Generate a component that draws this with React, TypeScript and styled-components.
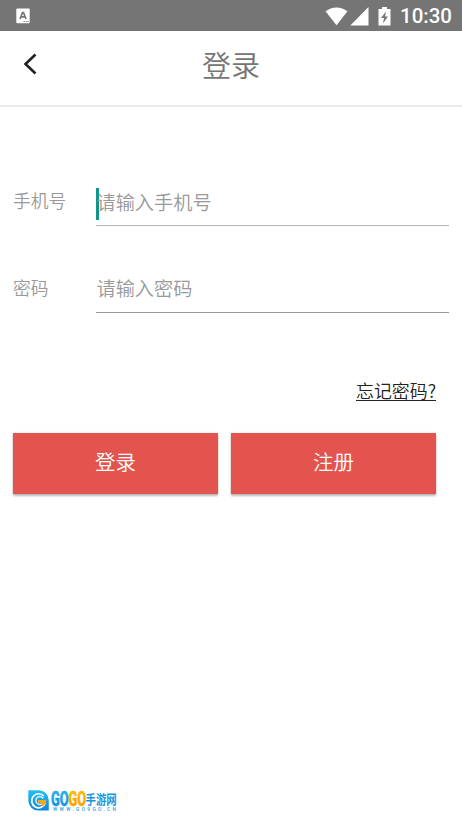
import React from "react";
import styled, { createGlobalStyle } from "styled-components";

const GlobalStyle = createGlobalStyle`
  * { box-sizing: border-box; }
  html, body { margin: 0; padding: 0; background: #fff; overflow: hidden; }
  body { font-family: "Noto Sans CJK SC", "Noto Sans", sans-serif; font-weight: 300; }
`;

const Screen = styled.div`
  width: 100%;
  height: 821px;
  display: flex;
  flex-direction: column;
  background: #fff;
  overflow: hidden;
`;

const StatusBar = styled.div`
  height: 31px;
  flex: none;
  display: flex;
  align-items: center;
  justify-content: space-between;
  padding: 0 10px 0 16px;
  background: #757575;
`;

const StatusIcons = styled.div`
  display: flex;
  align-items: center;
`;

const Clock = styled.time`
  margin-left: 9px;
  font: 500 20.5px/31px Roboto, sans-serif;
  color: #fff;
  padding-top: 1px;
`;

const Header = styled.header`
  height: 76px;
  flex: none;
  display: grid;
  grid-template-columns: 60px 1fr 60px;
  border-bottom: 2px solid #ebebeb;
`;

const BackButton = styled.button`
  height: 65px;
  padding: 0;
  border: 0;
  background: none;
  display: flex;
  align-items: center;
  justify-content: center;
`;

const Title = styled.h1`
  margin: 0;
  text-align: center;
  font-size: 29px;
  font-weight: 350;
  line-height: 67px;
  color: #757575;
`;

const Form = styled.form`
  display: flex;
  flex-direction: column;
  padding: 74px 13px 0;
`;

const Field = styled.div<{ $height: number }>`
  display: grid;
  grid-template-columns: 83px 1fr;
  height: ${(p) => p.$height}px;
`;

const Label = styled.label<{ $offset: number }>`
  padding-top: ${(p) => p.$offset}px;
  font-size: 17.8px;
  line-height: 26px;
  font-weight: 350;
  color: #999;
`;

const InputBox = styled.div<{ $offset: number; $line: string }>`
  display: flex;
  align-items: flex-start;
  padding-top: ${(p) => p.$offset}px;
  border-bottom: 1px solid ${(p) => p.$line};
`;

const Caret = styled.span`
  width: 3px;
  height: 32px;
  margin-right: -3px;
  background: #0f9687;
`;

const Placeholder = styled.span<{ $lineHeight: number }>`
  padding-left: 0.5px;
  font-size: 19.2px;
  line-height: ${(p) => p.$lineHeight}px;
  font-weight: 350;
  color: #999;
`;

const ForgotLink = styled.a`
  align-self: flex-end;
  margin: 66px 13px 0 0;
  height: 22px;
  font-size: 17.9px;
  line-height: 22px;
  font-weight: 350;
  color: #222;
  border-bottom: 1px solid #222;
`;

const Actions = styled.div`
  display: grid;
  grid-template-columns: 205px 205px;
  column-gap: 13px;
  margin-top: 32px;
`;

const ActionButton = styled.button`
  height: 61px;
  border: 0;
  padding: 0 0 5px;
  background: #e2544d;
  color: #fff;
  font: 350 20.5px/30px "Noto Sans CJK SC", sans-serif;
  box-shadow: 0 2px 2px rgba(0, 0, 0, 0.26), 0 0 2px rgba(0, 0, 0, 0.12);
`;

const Footer = styled.footer`
  margin-top: auto;
  height: 33px;
  padding-left: 27px;
`;

const KeyboardIcon = () => (
  <svg width="14" height="16" viewBox="0 0 14 16">
    <rect x="0.3" y="0.5" width="13.4" height="14.8" rx="1" fill="#fff" />
    <path d="M4 11 6.500 4.500h1L10 11M5 8.800h4" fill="none" stroke="#757575" strokeWidth="1.700" />
    <path d="M7.500 13.500h5.500" stroke="#888" strokeWidth="1" strokeDasharray="1.300 .7" />
  </svg>
);

const SignalIcons = () => (
  <svg width="66" height="20" viewBox="325 5 66 20">
    <path d="M325.500 10.200C332 5.100 341 5.100 347.500 10.200L336.500 24.300Z" fill="#fff" />
    <path d="M368.500 6v18.500H350.300Z" fill="#fff" />
    <path d="M382 6h5v2h3.500v16.500h-12V8h3.500Z" fill="#fff" />
    <path d="M386 10.500 381 17h3l-1 5.500 5-7h-3Z" fill="#757575" />
  </svg>
);

const BackIcon = () => (
  <svg width="16" height="24" viewBox="0 0 16 24">
    <path d="M13.500 2.500 3.500 12l10 9.500" fill="none" stroke="#222" strokeWidth="2.600" />
  </svg>
);

const Logo = () => (
  <svg width="92" height="24" viewBox="27 788 92 24" overflow="visible">
    <defs>
      <linearGradient id="blue" x1="0" y1="0" x2="0" y2="1">
        <stop offset="0" stopColor="#27c0f4" />
        <stop offset="1" stopColor="#0a84dc" />
      </linearGradient>
      <linearGradient id="orange" x1="0" y1="0" x2="0" y2="1">
        <stop offset="0" stopColor="#ffc800" />
        <stop offset="1" stopColor="#ff9000" />
      </linearGradient>
    </defs>
    <path d="M28.300 790.300H39a10 10 0 0 1 9.800 10v10.200H38.500a10 10 0 0 1-10.200-10Z" fill="url(#blue)" />
    <path d="M43.800 796A7 7 0 1 0 45.300 803" fill="none" stroke="#fff" strokeWidth="1.700" />
    <path d="M43.300 798.500A4 4 0 1 0 42 804" fill="none" stroke="#d4f3ff" strokeWidth="1.500" />
    <path d="M38 800h8.300c0 3-1.500 5.500-4 6.500l-.8-3.500H38Z" fill="#ffa319" />
    <g fontFamily="Roboto, sans-serif" fontWeight="800" fontSize="18">
      <text transform="translate(51 805.500) scale(.68 1.080)" textLength="26" lengthAdjust="spacingAndGlyphs" fill="url(#blue)" stroke="#189fe4" strokeWidth="0.500">GO</text>
      <text transform="translate(68.500 805.500) scale(.68 1.080)" textLength="26" lengthAdjust="spacingAndGlyphs" fill="url(#orange)" stroke="#ffab00" strokeWidth="0.500">GO</text>
    </g>
    <text transform="translate(85.500 804.300) scale(.8 1)" textLength="39" lengthAdjust="spacingAndGlyphs" fontFamily="Noto Sans CJK SC, sans-serif" fontWeight="700" fontSize="13" fill="#1596e0">手游网</text>
    <text x="53" y="810.800" textLength="63" fontFamily="Roboto, sans-serif" fontWeight="500" fontSize="4.800" fill="#2ba5e4">WWW.GO9GO.CN</text>
  </svg>
);

export default function App() {
  return (
    <>
      <GlobalStyle />
      <Screen>
        <StatusBar>
          <KeyboardIcon />
          <StatusIcons>
            <SignalIcons />
            <Clock>10:30</Clock>
          </StatusIcons>
        </StatusBar>
        <Header>
          <BackButton type="button" aria-label="返回"><BackIcon /></BackButton>
          <Title>登录</Title>
        </Header>
        <Form>
          <Field $height={45}>
            <Label $offset={6}>手机号</Label>
            <InputBox $offset={7} $line="#b5b5b5">
              <Caret />
              <Placeholder $lineHeight={29}>请输入手机号</Placeholder>
            </InputBox>
          </Field>
          <Field $height={87}>
            <Label $offset={48}>密码</Label>
            <InputBox $offset={46} $line="#999">
              <Placeholder $lineHeight={32}>请输入密码</Placeholder>
            </InputBox>
          </Field>
          <ForgotLink>忘记密码?</ForgotLink>
          <Actions>
            <ActionButton type="button">登录</ActionButton>
            <ActionButton type="button">注册</ActionButton>
          </Actions>
        </Form>
        <Footer><Logo /></Footer>
      </Screen>
    </>
  );
}
